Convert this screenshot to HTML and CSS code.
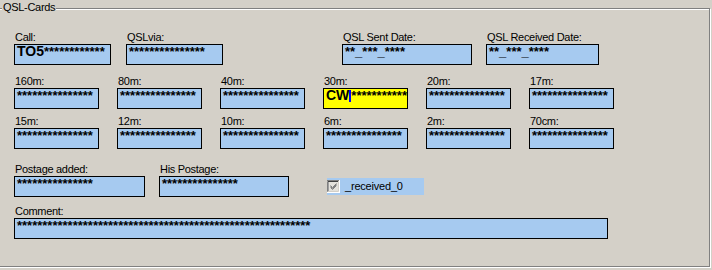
FILE: index.html
```html
<!DOCTYPE html>
<html>
<head>
<meta charset="utf-8">
<title>QSL-Cards</title>
<link rel="stylesheet" href="styles.css">
</head>
<body>
<div class="group">
  <span class="legend">QSL-Cards</span>

  <div class="row r1">
    <div class="fld w97"><div class="lbl">Call:</div><div class="box"><span class="big">TO5</span>************</div></div>
    <div class="fld w97 ml15"><div class="lbl">QSLvia:</div><div class="box">***************</div></div>
    <div class="fld w130 ml119"><div class="lbl">QSL Sent Date:</div><div class="box">**_***_****</div></div>
    <div class="fld w113 ml14"><div class="lbl">QSL Received Date:</div><div class="box">**_***_****</div></div>
  </div>

  <div class="row r2 bands">
    <div class="fld w85"><div class="lbl">160m:</div><div class="box">***************</div></div>
    <div class="fld w85"><div class="lbl">80m:</div><div class="box">***************</div></div>
    <div class="fld w85"><div class="lbl">40m:</div><div class="box">***************</div></div>
    <div class="fld w85"><div class="lbl">30m:</div><div class="box focus"><span class="big">CW</span><span class="caret"></span>***********</div></div>
    <div class="fld w85"><div class="lbl">20m:</div><div class="box">***************</div></div>
    <div class="fld w85"><div class="lbl">17m:</div><div class="box">***************</div></div>
  </div>

  <div class="row r3 bands">
    <div class="fld w85"><div class="lbl">15m:</div><div class="box">***************</div></div>
    <div class="fld w85"><div class="lbl">12m:</div><div class="box">***************</div></div>
    <div class="fld w85"><div class="lbl">10m:</div><div class="box">***************</div></div>
    <div class="fld w85"><div class="lbl">6m:</div><div class="box">***************</div></div>
    <div class="fld w85"><div class="lbl">2m:</div><div class="box">***************</div></div>
    <div class="fld w85"><div class="lbl">70cm:</div><div class="box">***************</div></div>
  </div>

  <div class="row r4">
    <div class="fld w131"><div class="lbl">Postage added:</div><div class="box">***************</div></div>
    <div class="fld w130 ml14"><div class="lbl">His Postage:</div><div class="box">***************</div></div>
    <div class="check">
      <svg class="cb" width="13" height="13" viewBox="0 0 13 13">
        <rect x="0" y="0" width="13" height="13" fill="#ffffff"/>
        <path d="M0 12.5V0.5H12.5" stroke="#808080" fill="none"/>
        <path d="M1 11.5V1.5H11.5" stroke="#404040" fill="none"/>
        <path d="M12.5 0V12.5H0" stroke="#ffffff" fill="none"/>
        <path d="M11.5 1V11.5H1" stroke="#d4d0c8" fill="none"/>
        <rect x="2" y="2" width="9" height="9" fill="#e4e2dc"/>
        <path d="M3.5 5.5L5.5 7.5L9.5 3.5M3.5 6.5L5.5 8.5L9.5 4.5M3.5 7.5L5.5 9.5L9.5 5.5" stroke="#808080" stroke-width="1" fill="none"/>
      </svg>
      <span class="cbtext">_received_0</span>
    </div>
  </div>

  <div class="row r5">
    <div class="fld w594"><div class="lbl">Comment:</div><div class="box">**********************************************************</div></div>
  </div>
</div>
</body>
</html>
```

FILE: styles.css
```css
html, body {
  margin: 0;
  padding: 0;
  background: #d4d0c8;
}
body {
  width: 712px;
  height: 270px;
  overflow: hidden;
  font-family: "Liberation Sans", Arial, sans-serif;
  color: #000;
}
.group {
  position: relative;
  box-sizing: border-box;
  margin: 8px 0 0 -2px;
  width: 712px;
  height: 259px;
  border: 1px solid #808080;
  box-shadow: 1px 1px 0 #ffffff, inset 1px 1px 0 #ffffff;
  padding: 22px 0 0 15px;
}
.legend {
  position: absolute;
  left: 3px;
  top: -8px;
  padding: 0 1px 0 1px;
  background: #d4d0c8;
  font-size: 11px;
  line-height: 13px;
  letter-spacing: -0.3px;
}
.row {
  display: flex;
  align-items: flex-start;
}
.bands {
  gap: 18px;
}
.r2 { margin-top: 10px; }
.r3 { margin-top: 6px; }
.r4 { margin-top: 14px; }
.r5 { margin-top: 8px; }

.fld {
  display: flex;
  flex-direction: column;
}
.lbl {
  font-size: 11px;
  line-height: 13px;
  height: 13px;
  padding-left: 1px;
  letter-spacing: -0.3px;
  white-space: nowrap;
}
.box {
  box-sizing: border-box;
  height: 21px;
  border: 1px solid #000;
  background: #a6caf0;
  padding: 0 0 0 2px;
  font-size: 13px;
  font-weight: bold;
  line-height: 13px;
  white-space: nowrap;
  overflow: hidden;
}
.big {
  font-size: 14px;
}
.box.focus {
  background: #ffff00;
}
.caret {
  display: inline-block;
  width: 2px;
  height: 12px;
  background: #0000ff;
  vertical-align: -2px;
}

.w85 { width: 85px; }
.w97 { width: 97px; }
.w113 { width: 113px; }
.w130 { width: 130px; }
.w131 { width: 131px; }
.w594 { width: 594px; }
.ml14 { margin-left: 14px; }
.ml15 { margin-left: 15px; }
.ml119 { margin-left: 119px; }

.check {
  display: flex;
  align-items: center;
  box-sizing: border-box;
  width: 97px;
  height: 17px;
  margin: 15px 0 0 38px;
  background: #a6caf0;
}
.cb {
  display: block;
  flex: none;
}
.cbtext {
  margin-left: 5px;
  font-size: 11px;
  line-height: 13px;
  letter-spacing: -0.2px;
}
```
